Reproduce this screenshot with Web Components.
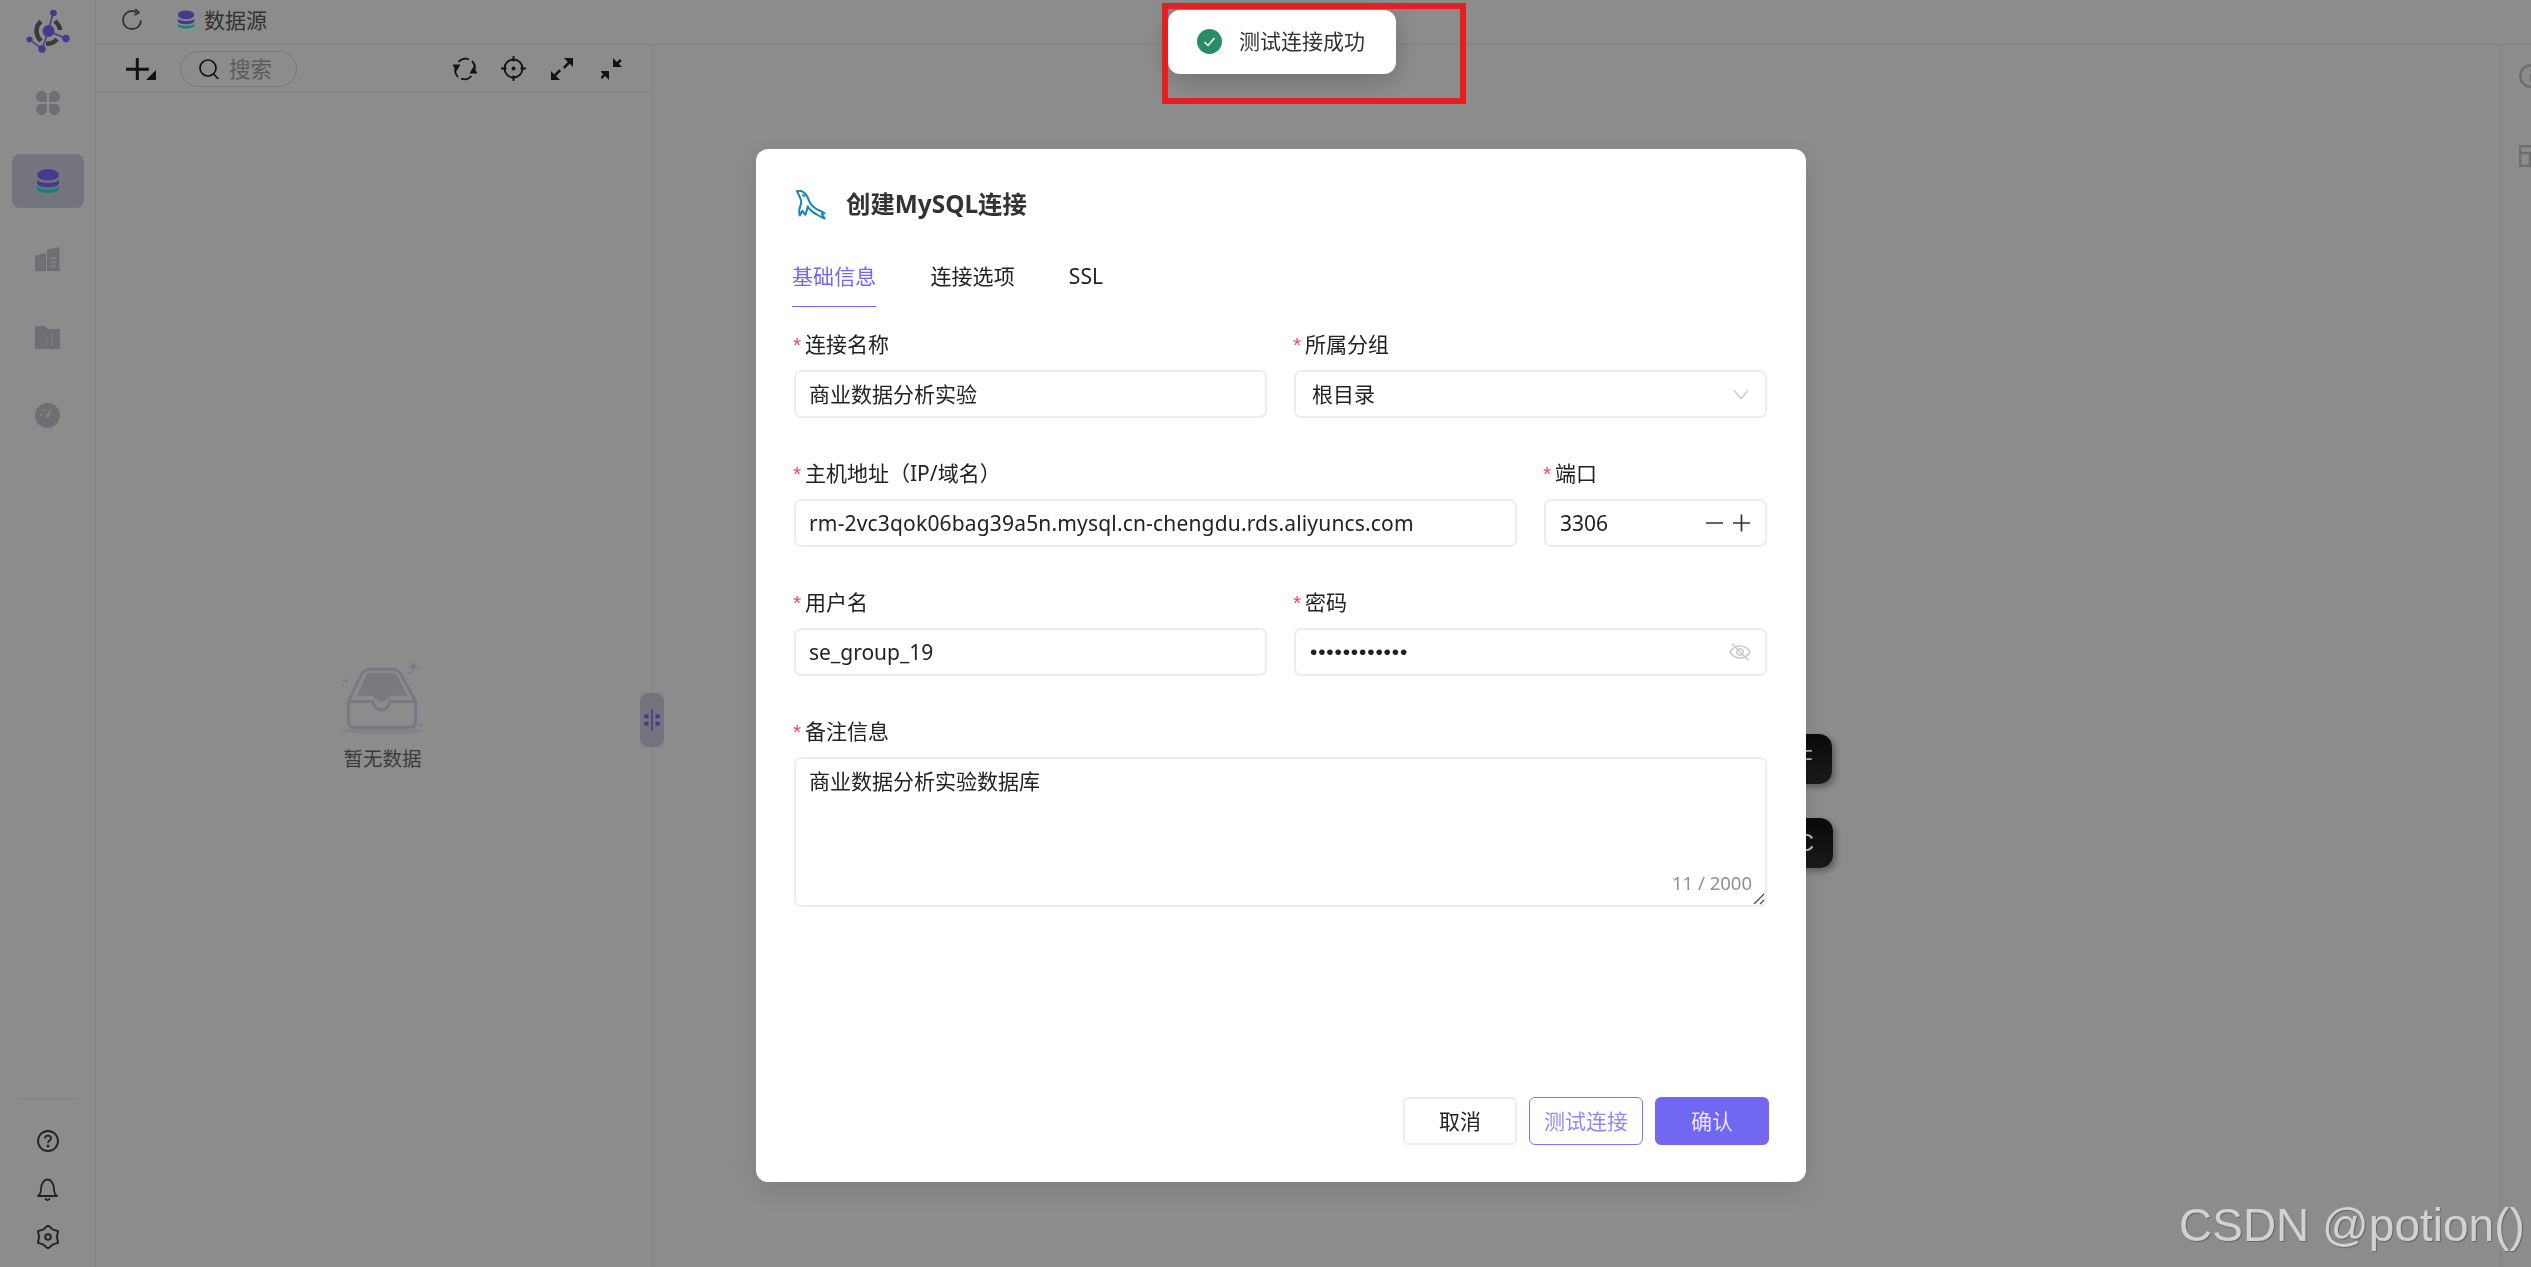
<!DOCTYPE html>
<html lang="zh-CN">
<head>
<meta charset="utf-8">
<title>创建MySQL连接</title>
<style>
html,body{margin:0;height:100%;overflow:hidden;background:#fff}
body{font-family:"Noto Sans","Noto Sans CJK SC",sans-serif;font-size:21px;color:#222}
</style>
</head>
<body>
<app-shell>
  <side-nav slot="nav"></side-nav>
  <top-bar slot="top"></top-bar>
  <tree-panel slot="tree"></tree-panel>
  <right-rail slot="rail"></right-rail>
</app-shell>
<modal-overlay></modal-overlay>
<float-tab style="top:734px;--w:92px"><span style="color:#c8ab86">F</span></float-tab>
<float-tab style="top:818px;--w:93px">C</float-tab>
<conn-dialog>
  <form-row>
    <form-field><span slot="label">连接名称</span><text-box>商业数据分析实验</text-box></form-field>
    <form-field><span slot="label">所属分组</span><select-box>根目录</select-box></form-field>
  </form-row>
  <form-row class="port">
    <form-field><span slot="label">主机地址（IP/域名）</span><text-box style="letter-spacing:.17px">rm-2vc3qok06bag39a5n.mysql.cn-chengdu.rds.aliyuncs.com</text-box></form-field>
    <form-field><span slot="label">端口</span><number-box>3306</number-box></form-field>
  </form-row>
  <form-row>
    <form-field><span slot="label">用户名</span><text-box>se_group_19</text-box></form-field>
    <form-field><span slot="label">密码</span><password-box>••••••••••••</password-box></form-field>
  </form-row>
  <form-field><span slot="label">备注信息</span><memo-box count="11 / 2000">商业数据分析实验数据库</memo-box></form-field>
</conn-dialog>
<msg-toast>测试连接成功</msg-toast>
<annot-box></annot-box>
<water-mark>CSDN @potion()</water-mark>

<script>
function def(name, css, html, extra){
  customElements.define(name, class extends HTMLElement{
    constructor(){
      super();
      this.attachShadow({mode:'open'}).innerHTML='<style>'+css+'</style>'+html;
    }
    connectedCallback(){ if(extra) extra.call(this); }
  });
}
const G='#c8c9d6', PU='#7a6cff', TE='#22f0e6', DK='#222';

const dbIcon=(w,h)=>`<svg width="${w}" height="${h}" viewBox="0 0 24 24" style="display:block">
<path d="M1 17.5v2.2C1 22.3 6 24 12 24s11-1.700 11-4.300v-2.200c-2 2-6.500 3-11 3s-9-1-11-3z" fill="${TE}"/>
<path d="M1 11v3c0 2.600 5 4.400 11 4.400S23 16.600 23 14v-3c-2 2-6.500 3-11 3s-9-1-11-3z" fill="${PU}"/>
<ellipse cx="12" cy="5.800" rx="11" ry="5.800" fill="${PU}"/>
</svg>`;

const gearPath=(()=>{let p=[];for(let i=0;i<12;i++){const a=(i*30-90)*Math.PI/180,r=i%2?8.9:11.6;p.push((12+r*Math.cos(a)).toFixed(2)+' '+(12+r*Math.sin(a)).toFixed(2));}return 'M'+p.join('L')+'z';})();

def('app-shell',`
:host{display:grid;grid-template-columns:96px 1fr;grid-template-rows:45px 1fr;height:1267px;width:2531px;background:#fff}
.nav{grid-row:1/3}
.body{display:grid;grid-template-columns:557px 1fr 30px;min-height:0}
.mid{border-right:1px solid #ececec}
`,`
<div class="nav"><slot name="nav"></slot></div>
<div><slot name="top"></slot></div>
<div class="body"><slot name="tree"></slot><div class="mid"></div><slot name="rail"></slot></div>
`);

def('side-nav',`
:host{display:flex;flex-direction:column;align-items:center;width:96px;height:1267px;box-sizing:border-box;border-right:1px solid #ececec;padding-bottom:6px}
.logo{height:76px;width:100%}
.logo svg{display:block}
.item{width:72px;height:54px;margin-bottom:24px;border-radius:8px;display:flex;align-items:center;justify-content:center}
.item.on{background:#d4d4e6}
.line{margin-top:auto;width:60px;height:1px;background:#ececec;margin-bottom:18px}
.b{height:48px;width:48px;display:flex;align-items:center;justify-content:center}
`,`
<div class="logo"><svg width="96" height="60" viewBox="0 0 96 60">
 <g stroke="${PU}" stroke-width="1.500" fill="none"><path d="M53 13 48.500 31 66 38.500M48.500 31 42 49 29 39"/></g>
 <g fill="none" stroke="#6a6a6a" stroke-width="4.500">
  <path d="M41 41C35 35 35 26 41 21.500"/><path d="M55 21C58 24 60 27 60 30"/><path d="M46 43.500C50 44 54 43 57 39"/>
 </g>
 <circle cx="48.500" cy="31" r="6" fill="${PU}"/>
 <g fill="${PU}"><circle cx="53.500" cy="13" r="3.300"/><circle cx="66" cy="38.500" r="3.700"/><circle cx="42" cy="49" r="3.700"/><circle cx="29.500" cy="39.500" r="3"/></g>
</svg></div>
<div class="item"><svg width="24" height="24" viewBox="0 0 24 24" fill="${G}">
 <path d="M5.500 0C9 0 11 2.500 11 5.500V9.500C11 10.500 10.500 11 9.500 11H5.500C2.500 11 0 9 0 5.500 0 2.500 2.500 0 5.500 0z"/>
 <path d="M18.500 0C15 0 13 2.500 13 5.500V9.500C13 10.500 13.500 11 14.500 11H18.500C21.500 11 24 9 24 5.500 24 2.500 21.500 0 18.500 0z"/>
 <path d="M5.500 24C9 24 11 21.500 11 18.500V14.500C11 13.500 10.500 13 9.500 13H5.500C2.500 13 0 15 0 18.500 0 21.500 2.500 24 5.500 24z"/>
 <path d="M18.500 24C15 24 13 21.500 13 18.500V14.500C13 13.500 13.500 13 14.500 13H18.500C21.500 13 24 15 24 18.500 24 21.500 21.500 24 18.500 24z"/>
</svg></div>
<div class="item on">${dbIcon(24,24)}</div>
<div class="item"><svg width="25" height="24" viewBox="0 0 25 24">
 <path d="M0 8.500 11 6V24H0z" fill="${G}"/><path d="M12 3 24.500 0V24H12z" fill="${G}"/>
 <g fill="#fff" opacity=".55"><rect x="15" y="10" width="6" height="2.500"/><rect x="15" y="14" width="6" height="2.500"/><rect x="15" y="18" width="6" height="2.500"/></g>
 <rect x="3.500" y="15" width="5" height="5" fill="none" stroke="#fff" stroke-opacity=".35"/>
</svg></div>
<div class="item"><svg width="25" height="23" viewBox="0 0 25 23">
 <path d="M0 1Q0 0 1 0H10L13 3H24Q25 3 25 4V23H0z" fill="${G}"/>
 <g fill="#fff" opacity=".4"><rect x="6" y="15" width="1.500" height="4"/><rect x="11" y="10" width="1.500" height="9"/><rect x="16" y="7" width="1.500" height="12"/></g>
</svg></div>
<div class="item"><svg width="25" height="25" viewBox="0 0 25 25">
 <circle cx="12.500" cy="12.500" r="12.500" fill="${G}"/>
 <path d="M10.500 13.500 17 5l-3.500 10z" fill="#fff" opacity=".9"/><circle cx="6" cy="11.500" r="1.200" fill="#fff" opacity=".8"/><circle cx="9" cy="7" r="1" fill="#fff" opacity=".8"/>
</svg></div>
<div class="line"></div>
<div class="b"><svg width="22" height="22" viewBox="0 0 22 22" fill="none" stroke="#3f3f3f" stroke-width="1.800"><circle cx="11" cy="11" r="10"/><path d="M8 8.500C8 6.700 9.300 5.700 11 5.700S14 6.900 14 8.400C14 10.700 11 10.500 11 13"/><circle cx="11" cy="16" r=".6" fill="#3f3f3f"/></svg></div>
<div class="b"><svg width="21" height="23" viewBox="0 0 21 23" fill="none" stroke="#3f3f3f" stroke-width="1.800" stroke-linejoin="round"><path d="M1 18c2-1.500 3-3 3-7 0-5 3-9.500 6.500-9.500S17 6 17 11c0 4 1 5.500 3 7z"/><path d="M8.500 21 10.500 22.200 12.500 21" stroke-linecap="round"/></svg></div>
<div class="b"><svg width="24" height="24" viewBox="0 0 24 24" fill="none" stroke="#3f3f3f" stroke-width="1.900" stroke-linejoin="round"><path d="${gearPath}"/><circle cx="12" cy="12" r="2.800"/></svg></div>
`);

def('top-bar',`
:host{display:flex;align-items:center;height:45px;box-sizing:border-box;border-bottom:1px solid #ececec;padding-left:26px;padding-bottom:5px}
svg{display:block}
.t{margin-left:9px;font-size:21px;line-height:28px;color:#5a5a5a}
.r{margin-right:35px}
`,`
<svg class="r" width="20" height="21" viewBox="0 0 20 21" fill="none" stroke="#5e5e5e" stroke-width="1.800"><path d="M14.500 3.400C13 2.400 11.500 2 10 2 5 2 1 6.200 1 11.300 1 16.400 5 20 10 20s9-3.600 9-8.700"/><path d="M13 0 17 3.600 12.500 6" stroke-linejoin="round"/></svg>
${dbIcon(18,19)}
<span class="t">数据源</span>
`);

def('tree-panel',`
:host{display:flex;flex-direction:column;height:1222px;box-sizing:border-box;border-right:1px solid #ececec;position:relative}
.bar{display:flex;align-items:center;height:47px;box-sizing:border-box;border-bottom:1px solid #ececec;padding:1px 30px 0 30px;flex:none}
svg{display:block;flex:none}
.search{display:flex;align-items:center;width:117px;height:36px;box-sizing:border-box;border:1px solid #d9d9d9;border-radius:18px;margin-left:24px;padding-left:18px;gap:10px}
.search span{font-size:21.500px;line-height:28px;color:#a8a8a8}
.tools{margin-left:auto;display:flex;align-items:center;gap:25px}
.empty{flex:1;display:flex;flex-direction:column;align-items:center;padding:569px 0 0 17px;box-sizing:border-box}
.empty span{font-size:19.500px;line-height:26px;color:#6d6d6d;margin-top:12px}
.handle{position:absolute;right:-12px;top:648px;width:24px;height:54px;border-radius:8px;background:#d4d4e6;display:flex;align-items:center;justify-content:center}
`,`
<div class="bar">
 <svg width="30" height="22" viewBox="0 0 30 22" fill="${DK}"><path d="M9.800 0h3v9.800h10v3h-10V22h-3V12.800H0v-3h9.800z"/><path d="M30 12v10H20z"/></svg>
 <div class="search">
  <svg width="20" height="20" viewBox="0 0 20 20" fill="none" stroke="${DK}" stroke-width="1.700"><ellipse cx="9" cy="9" rx="8" ry="8"/><path d="M14.500 15 19 19.500" stroke-linecap="round"/></svg>
  <span>搜索</span>
 </div>
 <div class="tools">
  <svg width="24" height="24" viewBox="0 0 24 24" fill="none" stroke="${DK}" stroke-width="1.800"><path d="M5.500 5C8 2.300 12 .8 16 2.500M18.500 19C16 21.700 12 23.200 8 21.500"/><path d="M3.300 9.500C1.500 13 2 17 5 20M20.700 14.500C22.500 11 22 7 19 4"/><path d="M.8 9.500 3.300 13.500 5.700 9.500z" fill="${DK}" transform="translate(.2 -1)"/><path d="M18.300 14.500 20.700 10.500 23.200 14.500z" fill="${DK}" transform="translate(-.2 1)"/></svg>
  <svg width="25" height="25" viewBox="0 0 25 25" fill="none" stroke="${DK}" stroke-width="1.900" style="margin-left:-1px"><circle cx="12.500" cy="12.500" r="9"/><path d="M12.500 0v5.500M12.500 19.500V25M0 12.500h5.500M19.500 12.500H25"/><circle cx="12.500" cy="12.500" r="2" fill="${DK}" stroke="none"/></svg>
  <svg width="22" height="22" viewBox="0 0 22 22" fill="${DK}"><path d="M13 0h9v9l-3.200-3.200-5 5-1.900-1.900 5-5zM0 22v-9l3.200 3.200 5-5 1.900 1.900-5 5L9 22z"/></svg>
  <svg width="22" height="22" viewBox="0 0 22 22" fill="${DK}" style="margin-left:3px;margin-right:-1px"><path d="M13 0v9h9l-3.200-3.200 3-3-1.900-1.900-3 3zM9 22v-9H0l3.200 3.200-3 3 1.900 1.900 3-3z" transform="translate(-1 0)"/></svg>
 </div>
</div>
<div class="empty">
 <svg width="85" height="73" viewBox="0 0 250 220">
  <ellipse cx="122" cy="210" rx="125" ry="10" fill="#eeeef5"/>
  <path d="M48 105 75 44Q78 36 90 36H155Q166 36 170 44L200 105H150L147 110Q122 135 97 110L95 105z" fill="#dcdcea"/>
  <path d="M22 122V180Q22 200 42 200H205Q225 200 225 180V122L180 40Q172 25 150 25H90Q72 25 62 40L22 122H97A25 25 0 0 0 147 122H225" fill="none" stroke="#dbdbf5" stroke-width="9" stroke-linejoin="round"/>
  <path d="M122 92V122" stroke="#dbdbf5" stroke-width="9"/>
  <g fill="#dbdbf5"><path d="M218 0 222 13 235 17 222 21 218 34 214 21 201 17 214 13z"/><path d="M208 29 210 34 215 36 210 38 208 43 206 38 201 36 206 34z"/><path d="M15 52 17 58 23 60 17 62 15 68 13 62 7 60 13 58z"/><circle cx="6" cy="73" r="3"/><path d="M240 186 242 191 247 193 242 195 240 200 238 195 233 193 238 191z"/></g>
 </svg>
 <span>暂无数据</span>
</div>
<div class="handle"><svg width="16" height="24" viewBox="0 0 16 24" fill="${PU}"><rect x="7.200" y="1" width="1.600" height="22"/><circle cx="2.500" cy="8.500" r="2.300"/><circle cx="13.500" cy="8.500" r="2.300"/><circle cx="2.500" cy="15.500" r="2.300"/><circle cx="13.500" cy="15.500" r="2.300"/></svg></div>
`);

def('right-rail',`
:host{display:flex;flex-direction:column;overflow:hidden;padding:19px 0 0 18px;gap:57px;box-sizing:border-box;height:1222px}
svg{display:block;flex:none}
`,`
<svg width="24" height="24" viewBox="0 0 24 24" fill="none" stroke="#c8c8c8" stroke-width="2.500"><circle cx="12" cy="12" r="10.700"/><path d="M12 6v1.500M12 10v8"/></svg>
<svg width="24" height="22" viewBox="0 0 24 22" fill="none" stroke="#c8c8c8" stroke-width="2.500"><path d="M1.200 1.200H23V21H1.200zM1.200 8H23M11 8v13"/></svg>
`);

def('modal-overlay',`:host{display:block;position:fixed;inset:0;background:rgba(0,0,0,.45);z-index:10}`,``);

def('float-tab',`
:host{position:fixed;left:1740px;width:var(--w);height:50px;z-index:11;box-sizing:border-box;padding-right:19px;border-radius:13px;background:linear-gradient(#0a0a0a,#1b1b1b);box-shadow:3px 3px 6px rgba(0,0,0,.35);display:flex;align-items:center;justify-content:flex-end;font:24px/30px "Liberation Sans",sans-serif;color:#bdbdbd}
`,`<slot></slot>`);

def('conn-dialog',`
:host{position:fixed;left:756px;top:149px;width:1050px;height:1033px;z-index:12;background:#fff;border-radius:12px;box-shadow:0 8px 30px rgba(0,0,0,.12);display:flex;flex-direction:column;box-sizing:border-box;padding:41px 37px 37px 36px}
.head{display:flex;align-items:center;height:30px;gap:21px}
.head svg{display:block;margin-left:4px}
.head b{font-size:24.400px;line-height:30px;font-weight:700;color:#333;margin-left:-1px;position:relative;top:-1px}
.tabs{display:flex;gap:54px;margin-top:41px;height:47px}
.tab{font-size:21px;line-height:30px;color:#222;height:47px;box-sizing:border-box;letter-spacing:.1px}
.tab.on{color:#7267f0;border-bottom:1px solid #7267f0;height:46px}
.form{display:flex;flex-direction:column;gap:39px;margin:20px 2px 0;flex:1}
.foot{display:flex;justify-content:flex-end;gap:12px}
.btn{width:114px;height:48px;box-sizing:border-box;border-radius:6px;border:2px solid #ebecf0;font-size:21px;line-height:44px;text-align:center;color:#222;background:#fff}
.btn.test{border:1px solid #7f74f2;line-height:46px;color:#9188f5}
.btn.ok{background:#7267f0;border-color:#7267f0;color:#e9e7ff}
`,`
<div class="head">
 <svg width="30" height="30" viewBox="0 0 32 31" fill="none" stroke="#0e86b8" stroke-width="2.100" stroke-linejoin="round" stroke-linecap="round">
  <path d="M1 .8C3 .2 5 .3 7 1.300 9.500 2.600 11 4 12 6.500 13 9 14 11.500 15.500 14 17 16.500 19 18.500 22 20 25 21.300 28 22.500 30.500 24.300L27.500 25 30.500 30C28 28.800 26 27.800 24 26.700 21.500 25.300 19 24 17 22.300 15 20.500 13.500 18.700 12.500 17 12 20 11.200 23 10 26L6.700 21.700 4 26.700C3.200 23.500 3.300 20.500 4 18.300 4.800 15.800 5.800 13.800 5.600 11.700 5.300 9.500 4.500 8 3.700 6.300 2.800 4.300 2 2.500 1 .8z"/>
  <path d="M7.300 5 9 5.700"/>
 </svg>
 <b>创建MySQL连接</b>
</div>
<div class="tabs"><div class="tab on">基础信息</div><div class="tab">连接选项</div><div class="tab">SSL</div></div>
<div class="form"><slot></slot></div>
<div class="foot"><div class="btn">取消</div><div class="btn test">测试连接</div><div class="btn ok">确认</div></div>
`);

def('form-row',`
:host{display:grid;grid-template-columns:1fr 1fr;gap:27px}
:host(.port){grid-template-columns:1fr 223px}
`,`<slot></slot>`);

def('form-field',`
:host{display:block;min-width:0}
.l{display:flex;align-items:center;height:32px;margin:0 0 10px -1px;font-size:21px;line-height:32px;color:#222}
.s{width:12px;flex:none;font:21px/21px "Liberation Sans",sans-serif;color:#e8476a;position:relative;top:0}
`,`
<div class="l"><span class="s">*</span><slot name="label"></slot></div>
<slot></slot>
`);

const boxCss=`
:host{display:flex;align-items:center;height:48px;box-sizing:border-box;border:2px solid #ecedf0;border-radius:7px;background:#fff;font-size:21px;line-height:28px;color:#222;padding:0 13px;white-space:nowrap;overflow:hidden}
svg{display:block;flex:none}
.g{flex:1;min-width:0}
`;
def('text-box',boxCss,`<slot></slot>`);
def('select-box',boxCss+`:host{padding:0 16px}`,`
<span class="g"><slot></slot></span>
<svg width="16" height="11" viewBox="0 0 16 11" fill="none" stroke="#c9cbd2" stroke-width="1.500"><path d="M1 1.500 8 9.500 15 1.500"/></svg>`);
def('number-box',boxCss+`:host{padding:0 15px 0 14px}`,`
<span class="g"><slot></slot></span>
<svg width="44" height="18" viewBox="0 0 44 18" fill="none" stroke="#333" stroke-width="1.700"><path d="M0 9H17M27 9H44M35.500 .5V17.500"/></svg>`);
def('password-box',boxCss+`:host{padding:0 14px 0 14px} .g{font:21px/28px "Liberation Sans",sans-serif;letter-spacing:.82px}`,`
<span class="g"><slot></slot></span>
<svg width="22" height="18" viewBox="0 0 22 18" fill="none" stroke="#c9cbd2" stroke-width="1.500"><path d="M1 9C3.500 5 7 3 11 3s7.500 2 10 6c-2.500 4-6 6-10 6S3.500 13 1 9z"/><circle cx="11" cy="9" r="3.200"/><path d="M3 .5 19.500 17.500"/></svg>`);
customElements.define('memo-box',class extends HTMLElement{
  constructor(){super();this.attachShadow({mode:'open'}).innerHTML=`<style>
  :host{display:flex;flex-direction:column;height:150px;box-sizing:border-box;border:2px solid #ecedf0;border-radius:7px;padding:8px 13px 10px 13px;font-size:21px;line-height:28px;color:#222;position:relative}
  .c{margin-top:auto;align-self:flex-end;font-size:18.500px;line-height:24px;color:#8f9099}
  svg{position:absolute;right:0;bottom:0;display:block}
  </style><div><slot></slot></div><div class="c"></div>
  <svg width="12" height="12" viewBox="0 0 12 12" fill="none" stroke="#444" stroke-width="1.200"><path d="M1 11 11 1M7 11 11 7"/></svg>`;}
  connectedCallback(){this.shadowRoot.querySelector('.c').textContent=this.getAttribute('count');}
});

def('msg-toast',`
:host{position:fixed;left:1168px;top:10px;width:228px;height:64px;z-index:13;box-sizing:border-box;background:#fff;border-radius:12px;box-shadow:0 6px 28px rgba(0,0,0,.22);display:flex;align-items:center;padding:0 0 2px 29px;gap:17px;font-size:21px;line-height:28px;color:#333}
svg{display:block;flex:none}
`,`
<svg width="25" height="25" viewBox="0 0 25 25"><circle cx="12.500" cy="12.500" r="12.500" fill="#2a8c64"/><path d="M7.500 13 11 16.500 17.500 9" fill="none" stroke="#fff" stroke-width="1.500"/></svg>
<slot></slot>`);

def('annot-box',`:host{position:fixed;left:1162px;top:3px;width:304px;height:101px;box-sizing:border-box;border:6px solid #e81e1e;z-index:14}`,``);

def('water-mark',`:host{position:fixed;left:2179px;top:1197px;z-index:15;font:46px/56px "Liberation Sans",sans-serif;color:#d2d2d2;text-shadow:1px 1px 1px rgba(0,0,0,.3);white-space:nowrap}`,`<slot></slot>`);
</script>
</body>
</html>
